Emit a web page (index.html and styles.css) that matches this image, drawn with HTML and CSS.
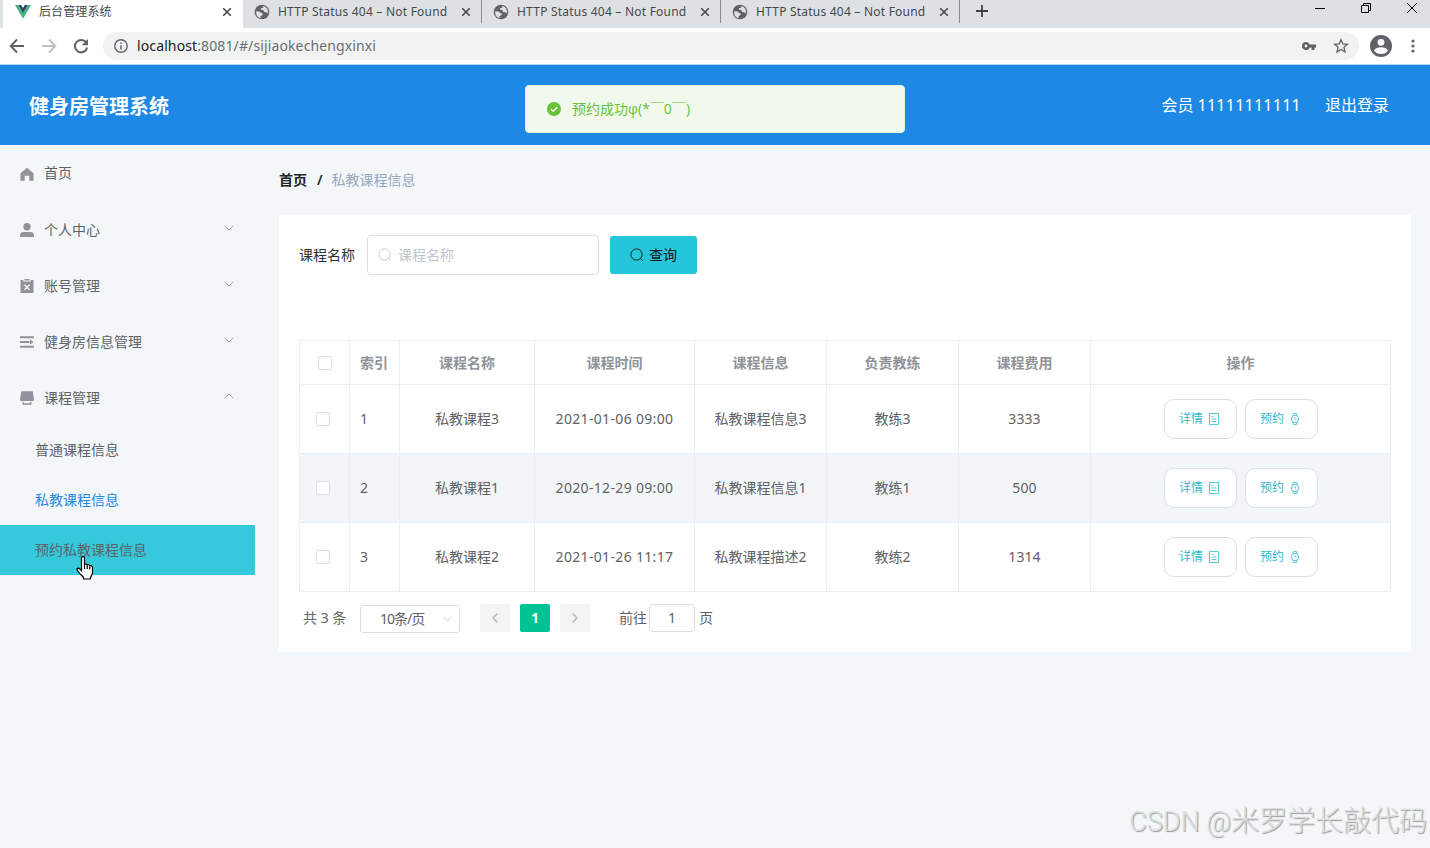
FILE: index.html
```
<!DOCTYPE html>
<html lang="zh-CN">

<head>
    <meta charset="utf-8">
    <title>后台管理系统</title>
    <link rel="stylesheet" href="styles.css">
</head>

<body>
    <svg class="sprite">
        <symbol id="close" viewBox="0 0 10 10"><path d="M1.2 1.2l7.6 7.6M8.8 1.2L1.2 8.8" stroke="currentColor" stroke-width="1.6" /></symbol>
        <symbol id="globe" viewBox="0 0 16 16">
            <circle cx="8" cy="8" r="7.3" fill="#5f6368" />
            <path d="M2.2 7.2l3.1.3 2 1.5 1.3.3v1.6l-2 1v2C3.6 13.500 1.800 11 2.200 7.200zM9.500 2l-.5 1.700-2 .6v1.500l2.400.2.600 2 2.300.2 1.700 1.400c.6-3.600-1.200-6.600-4.500-7.600z" fill="#dee1e6" />
        </symbol>
        <symbol id="down" viewBox="0 0 10 6"><path d="M.6.7L5 5 9.400.7" fill="none" stroke="currentColor" /></symbol>
        <symbol id="search" viewBox="0 0 14 14"><circle cx="6.500" cy="6.500" r="5.600" fill="none" stroke="currentColor" stroke-width=".9" /><path d="M10.400 10.400l2.200 2.200" stroke="currentColor" stroke-width=".9" /></symbol>
        <symbol id="doc" viewBox="0 0 12 12"><path d="M1.500.5h9v11h-9zM3.500 3.500h2M3.500 6h5M3.500 8.500h5" fill="none" stroke="currentColor" stroke-width=".8" /></symbol>
        <symbol id="watch" viewBox="0 0 12 12"><circle cx="6" cy="6" r="3.700" fill="none" stroke="currentColor" stroke-width=".8" /><path d="M4 2.800L4.400.5h3.200L8 2.800M4 9.200l.4 2.300h3.200L8 9.200M6 4.200V6h1.500" fill="none" stroke="currentColor" stroke-width=".8" /></symbol>
    </svg>

    <div class="tabs">
        <div class="edge"></div>
        <div class="tab active">
            <svg class="favicon" viewBox="0 0 16 14"><path d="M0 0h3.200L8 8.300 12.800 0H16L8 13.800z" fill="#41b883" /><path d="M3.200 0h3L8 3.100 9.800 0h3L8 8.300z" fill="#35495e" /></svg>
            <span>后台管理系统</span>
            <svg class="close"><use href="#close" /></svg>
        </div>
        <div class="tab">
            <svg class="favicon"><use href="#globe" /></svg>
            <span>HTTP Status 404 – Not Found</span>
            <svg class="close"><use href="#close" /></svg>
        </div>
        <div class="tab">
            <svg class="favicon"><use href="#globe" /></svg>
            <span>HTTP Status 404 – Not Found</span>
            <svg class="close"><use href="#close" /></svg>
        </div>
        <div class="tab">
            <svg class="favicon"><use href="#globe" /></svg>
            <span>HTTP Status 404 – Not Found</span>
            <svg class="close"><use href="#close" /></svg>
        </div>
        <svg class="plus" viewBox="0 0 12 12"><path d="M6 0v12M0 6h12" stroke="#3c4043" stroke-width="1.800" /></svg>
        <div class="window-btns">
            <svg viewBox="0 0 12 12"><path d="M1 6.500h10" stroke="#000" /></svg>
            <svg viewBox="0 0 12 12"><path d="M1.500 3.500h7v7h-7zM3.500 3.500v-2h7v7h-2" fill="none" stroke="#000" /></svg>
            <svg viewBox="0 0 12 12"><path d="M1 1l10 10M11 1L1 11" stroke="#000" /></svg>
        </div>
    </div>

    <div class="toolbar">
        <svg class="nav" viewBox="0 0 16 16"><path d="M15 8H2M8 1.500L1.700 8 8 14.500" fill="none" stroke="#5f6368" stroke-width="1.900" /></svg>
        <svg class="nav" viewBox="0 0 16 16"><path d="M1 8h13M8 1.500L14.300 8 8 14.500" fill="none" stroke="#bdc1c6" stroke-width="1.900" /></svg>
        <svg class="nav" viewBox="0 0 16 16"><path d="M13.500 5A6.200 6.200 0 1 0 14.200 9.500" fill="none" stroke="#5f6368" stroke-width="2" /><path d="M15 1v6.300H8.700z" fill="#5f6368" /></svg>
        <div class="address">
            <svg class="info" viewBox="0 0 14 14"><circle cx="7" cy="7" r="6.200" fill="none" stroke="#5f6368" stroke-width="1.400" /><path d="M7 6.200v4.300M7 3.400v1.600" stroke="#5f6368" stroke-width="1.500" /></svg>
            <span class="url"><b>localhost</b>:8081/#/sijiaokechengxinxi</span>
            <svg class="key" viewBox="0 0 14 8"><path d="M4 0a4 4 0 1 0 3.700 5.400H9.500V8h3V5.400H14V2.600H7.700A4 4 0 0 0 4 0zM4 2.600a1.400 1.400 0 1 1 0 2.800 1.400 1.400 0 0 1 0-2.800z" fill="#5f6368" fill-rule="evenodd" /></svg>
            <svg class="star" viewBox="0 0 16 16"><path d="M8 1.700l1.800 4.200 4.600.4-3.500 3 1.100 4.500L8 11.400l-4 2.400 1.100-4.500-3.500-3 4.600-.4z" fill="none" stroke="#5f6368" stroke-width="1.300" /></svg>
        </div>
        <svg class="avatar" viewBox="0 0 22 22"><circle cx="11" cy="11" r="11" fill="#5f6368" /><circle cx="11" cy="7.300" r="3.400" fill="#fff" /><path d="M4 15.500c1.500-4.500 12.500-4.500 14 0-3 4.700-11 4.700-14 0z" fill="#fff" /></svg>
        <svg class="dots" viewBox="0 0 4 14"><g fill="#5f6368"><circle cx="2" cy="2" r="1.600" /><circle cx="2" cy="7" r="1.600" /><circle cx="2" cy="12" r="1.600" /></g></svg>
    </div>

    <header class="header">
        <h1>健身房管理系统</h1>
        <div class="user"><span class="member">会员 <span class="phone">11111111111</span></span><span>退出登录</span></div>
        <div class="message">
            <svg viewBox="0 0 14 14"><circle cx="7" cy="7" r="7" fill="#67c23a" /><path d="M3.800 7.100l2.300 2.200 4.200-4.100" fill="none" stroke="#fff" stroke-width="1.300" /></svg>
            <span>预约成功<span class="face">φ(*￣0￣)</span></span>
        </div>
    </header>

    <div class="container">
        <aside class="sidebar">
            <div class="menu home">
                <svg viewBox="0 0 14 14"><path d="M7 .8l6.500 5.500v7.500H9.300V8.700H4.700v5.100H.5V6.300z" /></svg>
                <span>首页</span>
            </div>
            <div class="menu">
                <svg viewBox="0 0 14 14"><circle cx="7" cy="3.700" r="3.700" /><path d="M0 14v-1.500C0 10 1.500 9 3.500 9h7c2 0 3.500 1 3.500 3.500V14z" /></svg>
                <span>个人中心</span>
                <svg class="arrow"><use href="#down" /></svg>
            </div>
            <div class="menu">
                <svg viewBox="0 0 14 14"><path d="M.5 1h2.800v1.500h7.400V1h2.800v13H.5zM4.500 0h5v1.500h-5z" /><path d="M4.500 5.800l5 5M9.500 5.800l-5 5" stroke="#f3f7f9" stroke-width="1.300" /></svg>
                <span>账号管理</span>
                <svg class="arrow"><use href="#down" /></svg>
            </div>
            <div class="menu">
                <svg viewBox="0 0 14 14"><path d="M0 1.200h14v2H0zM0 6h9.500v2H0zM10 4.500L13.500 7 10 9.500zM0 10.800h14v2H0z" /></svg>
                <span>健身房信息管理</span>
                <svg class="arrow"><use href="#down" /></svg>
            </div>
            <div class="menu open">
                <svg viewBox="0 0 14 14"><path d="M1.300.2h11.400L14 8.500c0 1-.5 1.500-1.500 1.500h-11C.5 10 0 9.500 0 8.500zM2.500 10.800h1.300v1.400h6.400v-1.400h1.300v2.900h-9z" /></svg>
                <span>课程管理</span>
                <svg class="arrow"><use href="#down" /></svg>
            </div>
            <div class="submenu">普通课程信息</div>
            <div class="submenu current">私教课程信息</div>
            <div class="submenu hover">预约私教课程信息
                <svg class="cursor" viewBox="0 0 18 25"><path d="M5.500 2c0-1.800 3-1.800 3 0v6.500c.8-.8 2.300-.5 2.700.5 1-.6 2.300-.2 2.500.8 1.300-.4 2.800.3 2.800 1.700v5c0 2-1.500 3.500-2 5V23h-7v-1.500c-1-1.700-3.500-3-4.500-5-1.200-2-2.500-2.800-2-3.800.8-1.200 2.500-.5 3.300.8l1.200 1.500zM8.500 8.500V13M11.200 9.500V13M13.700 10.500V13.500" fill="#fff" stroke="#000" stroke-width="1.200" stroke-linejoin="round" /></svg>
            </div>
        </aside>

        <main class="main">
            <div class="breadcrumb"><b>首页</b><b class="slash">/</b><span>私教课程信息</span></div>
            <div class="card">
                <div class="search">
                    <label>课程名称</label>
                    <div class="input"><svg><use href="#search" /></svg><span>课程名称</span></div>
                    <div class="query"><svg><use href="#search" /></svg><span>查询</span></div>
                </div>

                <table class="table">
                    <colgroup>
                        <col class="w50"><col class="w50"><col class="w135"><col class="w160"><col class="w132"><col class="w132"><col class="w132"><col>
                    </colgroup>
                    <thead>
                        <tr><th><i class="checkbox"></i></th><th class="index">索引</th><th>课程名称</th><th>课程时间</th><th>课程信息</th><th>负责教练</th><th>课程费用</th><th>操作</th></tr>
                    </thead>
                    <tbody>
                        <tr>
                            <td class="check"><i class="checkbox"></i></td><td class="index">1</td><td>私教课程3</td><td class="date">2021-01-06 09:00</td><td>私教课程信息3</td><td>教练3</td><td class="price">3333</td>
                            <td><div class="actions"><span class="btn">详情<svg><use href="#doc" /></svg></span><span class="btn">预约<svg><use href="#watch" /></svg></span></div></td>
                        </tr>
                        <tr class="striped">
                            <td class="check"><i class="checkbox"></i></td><td class="index">2</td><td>私教课程1</td><td class="date">2020-12-29 09:00</td><td>私教课程信息1</td><td>教练1</td><td class="price">500</td>
                            <td><div class="actions"><span class="btn">详情<svg><use href="#doc" /></svg></span><span class="btn">预约<svg><use href="#watch" /></svg></span></div></td>
                        </tr>
                        <tr>
                            <td class="check"><i class="checkbox"></i></td><td class="index">3</td><td>私教课程2</td><td class="date">2021-01-26 11:17</td><td>私教课程描述2</td><td>教练2</td><td class="price">1314</td>
                            <td><div class="actions"><span class="btn">详情<svg><use href="#doc" /></svg></span><span class="btn">预约<svg><use href="#watch" /></svg></span></div></td>
                        </tr>
                    </tbody>
                </table>

                <div class="pagination">
                    <span class="total">共 3 条</span>
                    <div class="sizes"><span>10条/页</span><svg><use href="#down" /></svg></div>
                    <div class="page prev"><svg><use href="#down" /></svg></div>
                    <div class="page on">1</div>
                    <div class="page next"><svg><use href="#down" /></svg></div>
                    <span class="jump">前往</span>
                    <div class="number">1</div>
                    <span>页</span>
                </div>
            </div>
        </main>
    </div>
    <div class="watermark"><span>CSDN @</span>米罗学长敲代码</div>
</body>

</html>
```
FILE: styles.css
```
* {
    box-sizing: border-box;
}

html,
body {
    margin: 0;
    height: 100%;
    overflow: hidden;
}

body {
    display: flex;
    flex-direction: column;
    position: relative;
    background-color: #f3f7f9;
    font-family: "Noto Sans", "Noto Sans CJK SC", sans-serif;
    font-size: 14px;
    line-height: 20px;
    color: #606266;
}

svg {
    flex: none;
}

.sprite {
    display: none;
}

/* browser */
.tabs {
    display: flex;
    height: 28px;
    background: #dee1e4;
    font-size: 12px;
    color: #45494d;
}

.edge {
    width: 3px;
    background: #dee1e4;
    border-bottom-right-radius: 3px;
}

.tab {
    display: flex;
    align-items: center;
    width: 239px;
    height: 23px;
    padding: 0 11px;
    letter-spacing: .22px;
}

.tab + .tab + .tab {
    box-shadow: -1px 0 #898c90;
}

.tab:nth-child(5) {
    border-right: 1px solid #898c90;
    padding-right: 10px;
}

.tab.active {
    width: 240px;
    height: 28px;
    padding: 0 11px 5px 12px;
    background: #fff;
    letter-spacing: .1px;
}

.tab .favicon {
    width: 16px;
    height: 16px;
    margin-right: 8px;
}

.tab.active .favicon {
    height: 14px;
}

.tab .close {
    width: 10px;
    height: 10px;
    margin-left: auto;
}

.plus {
    width: 12px;
    height: 12px;
    margin: 5px 0 0 16px;
}

.window-btns {
    display: flex;
    gap: 34px;
    margin: 2px 12px 0 auto;
}

.window-btns svg {
    width: 12px;
    height: 12px;
}

.toolbar {
    display: flex;
    align-items: center;
    height: 37px;
    padding: 0 15px 1px 9px;
    background: #fff;
    border-bottom: 1px solid #a9dcf8;
}

.toolbar .nav {
    width: 16px;
    height: 16px;
    margin-right: 16px;
}

.address {
    display: flex;
    flex: 1;
    align-items: center;
    height: 28px;
    margin-left: -2px;
    padding: 0 10px 0 11px;
    border-radius: 14px;
    background: #f1f3f3;
}

.info {
    width: 14px;
    height: 14px;
    margin-right: 9px;
}

.url {
    flex: 1;
    letter-spacing: .12px;
    color: #6a6e72;
}

.url b {
    font-weight: 400;
    color: #202124;
}

.key {
    width: 14px;
    height: 8px;
    margin-right: 17px;
}

.star {
    width: 16px;
    height: 16px;
}

.avatar {
    width: 22px;
    height: 22px;
    margin: 0 19px 0 11px;
}

.dots {
    width: 4px;
    height: 14px;
}

/* header */
.header {
    display: flex;
    flex: none;
    align-items: center;
    justify-content: space-between;
    position: relative;
    height: 80px;
    padding: 0 41px 0 29px;
    background: #1e88e5;
    color: #fff;
}

.header h1 {
    margin: 4px 0 0;
    font-size: 20px;
    font-weight: 700;
}

.user {
    display: flex;
    gap: 24px;
    font-size: 16px;
}

.phone {
    letter-spacing: .25px;
}

.message {
    display: flex;
    align-items: center;
    position: absolute;
    top: 20px;
    left: 525px;
    width: 380px;
    height: 48px;
    padding-left: 21px;
    border: 1px solid #e1f3d8;
    border-radius: 4px;
    background: #f0f9eb;
    color: #67c23a;
}

.message svg {
    width: 14px;
    height: 14px;
    margin-right: 11px;
}

.face {
    font-family: "Open Sans", "Noto Sans CJK SC", sans-serif;
}

/* layout */
.container {
    display: flex;
    flex: 1;
}

.sidebar {
    width: 255px;
}

.menu {
    display: flex;
    align-items: center;
    height: 56px;
    padding: 2px 21px 0 20px;
    color: #5f6368;
}

.menu.home {
    padding-top: 0;
}

.menu svg {
    width: 14px;
    height: 14px;
    margin-right: 10px;
    fill: #909399;
}

.menu.home svg {
    margin-top: 2px;
}

.menu svg.arrow {
    width: 10px;
    height: 6px;
    margin: -5px 0 0 auto;
    color: #a0a3a8;
}

.menu.open .arrow {
    transform: rotate(180deg);
}

.submenu {
    position: relative;
    height: 50px;
    padding-left: 35px;
    line-height: 50px;
    color: #5f6368;
}

.submenu.current {
    color: #1e88e5;
}

.submenu.hover {
    background: #35c9db;
}

.cursor {
    position: absolute;
    top: 31px;
    left: 76px;
    width: 18px;
    height: 25px;
}

.main {
    flex: 1;
    padding: 10px 19px 0 24px;
}

.breadcrumb {
    display: flex;
    align-items: center;
    height: 50px;
    color: #97a8be;
}

.breadcrumb b {
    color: #222;
    font-weight: 600;
}

.breadcrumb .slash {
    margin: 0 9px 0 10px;
}

.card {
    height: 437px;
    margin-top: 10px;
    padding: 20px 20px 0;
    background: #fefffe;
}

.search {
    display: flex;
    align-items: center;
    height: 40px;
    margin-bottom: 65px;
    color: #303133;
}

.search svg {
    width: 14px;
    height: 14px;
}

.input {
    display: flex;
    align-items: center;
    gap: 6px;
    width: 232px;
    height: 40px;
    margin: 0 11px 0 12px;
    padding-left: 10px;
    border: 1px solid #dcdfe6;
    border-radius: 4px;
    color: #c0c4cc;
}

.query {
    display: flex;
    align-items: center;
    justify-content: center;
    gap: 5px;
    width: 87px;
    height: 38px;
    border-radius: 3px;
    background: #26c6da;
    color: #111;
}

/* table */
.table {
    width: 1092px;
    table-layout: fixed;
    border-collapse: collapse;
    text-align: center;
}

.w50 {
    width: 50px;
}

.w135 {
    width: 135px;
}

.w160 {
    width: 160px;
}

.w132 {
    width: 132px;
}

.table th,
.table td {
    height: 69px;
    padding: 0;
    border: 1px solid #ebeef5;
}

.table th {
    height: 44px;
    font-weight: 700;
    color: #909399;
}

.table .index {
    padding-left: 10px;
    text-align: left;
}

.table .date {
    letter-spacing: .33px;
}

.table .price {
    letter-spacing: .1px;
}

.striped {
    background: #f3f6f9;
}

.checkbox {
    display: block;
    width: 14px;
    height: 14px;
    margin: 0 auto;
    border: 1px solid #dcdfe6;
    border-radius: 2px;
    background: #fff;
}

.check .checkbox {
    margin-left: 16px;
}

.actions {
    display: flex;
    justify-content: center;
    gap: 8px;
}

.btn {
    display: flex;
    align-items: center;
    justify-content: center;
    gap: 5px;
    width: 73px;
    height: 40px;
    padding-right: 1px;
    border: 1px solid #dcdfe6;
    border-radius: 10px;
    background: #fff;
    font-size: 12px;
    color: #2fb9cb;
}

.btn svg {
    width: 12px;
    height: 12px;
}

/* pagination */
.pagination {
    display: flex;
    align-items: center;
    height: 28px;
    margin-top: 12px;
    padding-left: 4px;
}

.total {
    width: 57px;
}

.sizes {
    display: flex;
    align-items: center;
    justify-content: space-between;
    width: 100px;
    height: 28px;
    margin: 1px 20px 0 0;
    padding: 0 7px 0 19px;
    border: 1px solid #dcdfe6;
    border-radius: 3px;
}

.sizes span {
    letter-spacing: -1px;
    word-spacing: 0;
}

.sizes svg {
    width: 9px;
    height: 6px;
    color: #c0c4cc;
}

.page {
    display: flex;
    align-items: center;
    justify-content: center;
    width: 30px;
    height: 28px;
    margin-right: 10px;
    border-radius: 2px;
    background: #f4f4f5;
    color: #b9bcc2;
}

.page svg {
    width: 10px;
    height: 6px;
    stroke-width: 1.6;
}

.prev svg {
    transform: rotate(90deg);
}

.next svg {
    transform: rotate(-90deg);
}

.page.on {
    background: #00c292;
    color: #fff;
    font-weight: 700;
}

.jump {
    margin-left: 19px;
}

.number {
    width: 46px;
    height: 28px;
    margin: 0 4px 0 2px;
    border: 1px solid #dcdfe6;
    border-radius: 4px;
    line-height: 26px;
    text-align: center;
}

.watermark {
    position: absolute;
    right: 3px;
    bottom: 6px;
    font-size: 28px;
    font-weight: 300;
    line-height: 40px;
    color: #dcdfe0;
    text-shadow: 1px 1px 1px #999;
    white-space: nowrap;
}

.watermark span {
    font-family: Roboto, "Liberation Sans", sans-serif;
    font-size: 27px;
}
```
